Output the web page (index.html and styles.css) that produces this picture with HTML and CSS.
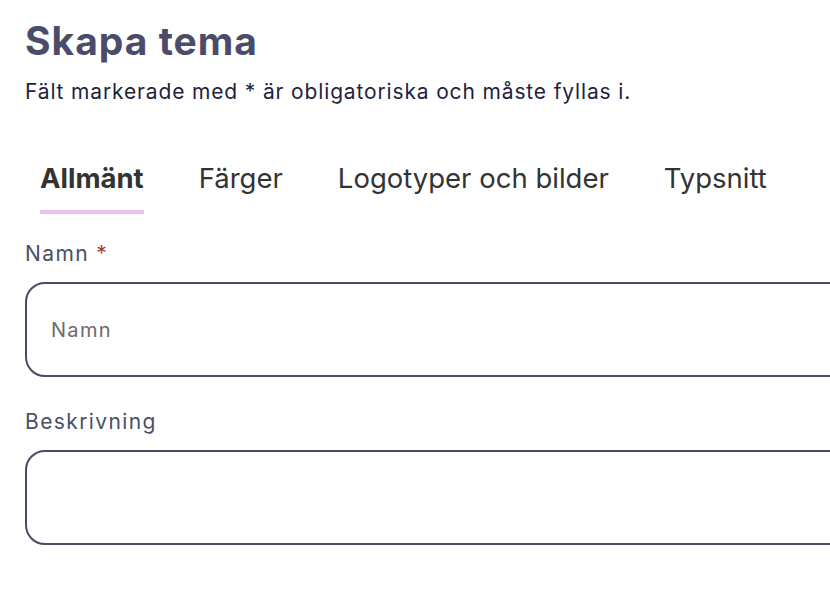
FILE: index.html
```html
<!DOCTYPE html>
<html lang="sv">
<head>
<meta charset="utf-8">
<title>Skapa tema</title>
<link rel="stylesheet" href="styles.css">
</head>
<body>
<main class="page">
  <h1 class="title">Skapa tema</h1>
  <p class="intro">Fält markerade med * är obligatoriska och måste fyllas i.</p>
  <nav class="tabs">
    <a class="tab active">Allmänt</a>
    <a class="tab">Färger</a>
    <a class="tab">Logotyper och bilder</a>
    <a class="tab">Typsnitt</a>
  </nav>
  <div class="field">
    <label class="label">Namn <span class="req">*</span></label>
    <input class="input" type="text" placeholder="Namn">
  </div>
  <div class="field field-next">
    <label class="label">Beskrivning</label>
    <input class="input" type="text">
  </div>
</main>
</body>
</html>
```
FILE: styles.css
```css
html, body {
  margin: 0;
  padding: 0;
  background: #fff;
  overflow: hidden;
}
body {
  font-family: Inter, "Noto Sans", sans-serif;
}
.page {
  padding: 18px 0 0 25px;
  width: 900px;
}
.title {
  margin: 0;
  font-size: 39px;
  font-weight: 700;
  color: #4b4b6b;
  line-height: 46px;
  letter-spacing: 1px;
}
.intro {
  margin: 15px 0 0;
  font-size: 21px;
  color: #1f1f3f;
  line-height: 26px;
  letter-spacing: 0.85px;
}
.tabs {
  display: flex;
  gap: 55px;
  margin-top: 57px;
  padding-left: 15px;
}
.tab {
  font-size: 27.5px;
  color: #333;
  padding-bottom: 16px;
  border-bottom: 4px solid transparent;
  line-height: 32px;
}
.tab.active {
  font-weight: 700;
  border-bottom-color: #e9c1ec;
}
.field {
  margin-top: 28px;
}
.field-next {
  margin-top: 33px;
}
.label {
  display: block;
  font-size: 21px;
  color: #4a5068;
  line-height: 24px;
  margin-bottom: 16px;
  letter-spacing: 1.4px;
}
.req {
  color: #a33a3a;
}
.input {
  display: block;
  box-sizing: border-box;
  width: 860px;
  height: 95px;
  margin: 0;
  border: 2px solid #464e66;
  border-radius: 20px;
  padding: 0 24px;
  font-family: Inter, "Noto Sans", sans-serif;
  font-size: 20px;
  letter-spacing: 1.3px;
  color: #333;
  background: #fff;
  outline: none;
}
.input::placeholder {
  color: #6b6b6b;
}
```
